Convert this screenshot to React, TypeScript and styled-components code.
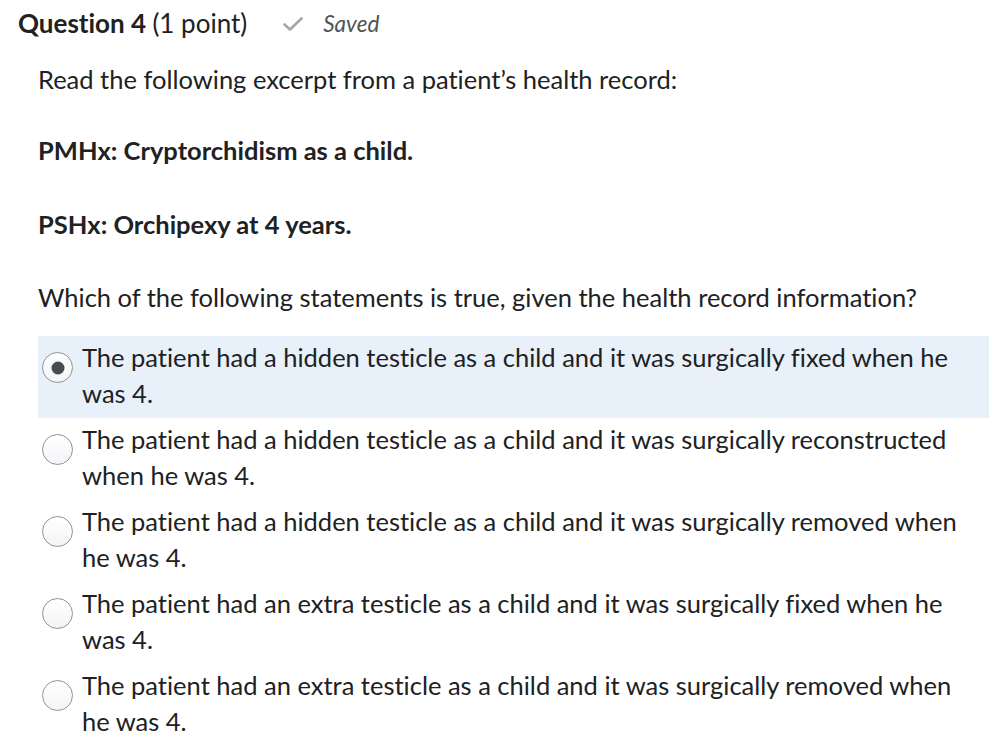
import styled, { createGlobalStyle } from 'styled-components';

const GlobalStyle = createGlobalStyle`
  body {
    margin: 0;
    background: #ffffff;
    font-family: Lato, 'Open Sans', sans-serif;
    font-variant-ligatures: none;
    color: #202122;
  }
`;

const options = [
  'The patient had a hidden testicle as a child and it was surgically fixed when he was 4.',
  'The patient had a hidden testicle as a child and it was surgically reconstructed when he was 4.',
  'The patient had a hidden testicle as a child and it was surgically removed when he was 4.',
  'The patient had an extra testicle as a child and it was surgically fixed when he was 4.',
  'The patient had an extra testicle as a child and it was surgically removed when he was 4.',
];

const App = () => {
  const selected = 0;

  return (
    <Page>
      <GlobalStyle />
      <Header>
        <Title>
          Question 4 <Points>(1 point)</Points>
        </Title>
        <Status>
          <CheckIcon viewBox="0 0 20 15">
            <polyline points="1.5,7.5 7,12.5 18.5,1.5" />
          </CheckIcon>
          <SavedText>Saved</SavedText>
        </Status>
      </Header>

      <Content>
        <Paragraph $gap={35}>Read the following excerpt from a patient’s health record:</Paragraph>
        <Paragraph $gap={38}>
          <strong>PMHx: Cryptorchidism as a child.</strong>
        </Paragraph>
        <Paragraph>
          <strong>PSHx: Orchipexy at 4 years.</strong>
        </Paragraph>
        <Paragraph>
          Which of the following statements is true, given the health record information?
        </Paragraph>

        <OptionList>
          {options.map((text, i) => (
            <Option key={i} $selected={i === selected}>
              <Radio $checked={i === selected} />
              <OptionText>{text}</OptionText>
            </Option>
          ))}
        </OptionList>
      </Content>
    </Page>
  );
};

export default App;

const Page = styled.div`
  width: 1000px;
  height: 742px;
  overflow: hidden;
  padding-top: 8px;
  box-sizing: border-box;
`;

const Header = styled.div`
  display: flex;
  align-items: center;
  padding-left: 18px;
  height: 30px;
`;

const Title = styled.h2`
  margin: 0;
  font-size: 26px;
  line-height: 30px;
  font-weight: 700;
  color: #202122;
`;

const Points = styled.span`
  font-weight: 400;
`;

const Status = styled.div`
  display: flex;
  align-items: center;
  margin-left: 36px;
  gap: 20px;
`;

const CheckIcon = styled.svg`
  width: 20px;
  height: 15px;
  fill: none;
  stroke: #a2a7aa;
  stroke-width: 2.6;
  stroke-linecap: round;
  stroke-linejoin: round;
  margin-top: 2px;
`;

const SavedText = styled.span`
  font-size: 22.5px;
  font-style: italic;
  color: #4f5356;
`;

const Content = styled.div`
  padding: 23px 11px 0 38px;
`;

const Paragraph = styled.p<{ $gap?: number }>`
  margin: 0 0 ${(p) => p.$gap ?? 37}px;
  font-size: 25.5px;
  line-height: 36px;

  strong {
    font-weight: 700;
  }
`;

const OptionList = styled.div`
  display: flex;
  flex-direction: column;
  margin-top: -16px;
`;

const Option = styled.label<{ $selected: boolean }>`
  display: flex;
  align-items: flex-start;
  gap: 9px;
  padding: 3px 0 7px 4px;
  background: ${(p) => (p.$selected ? '#e8f0fa' : 'transparent')};
  cursor: pointer;
`;

const Radio = styled.span<{ $checked: boolean }>`
  position: relative;
  flex: 0 0 auto;
  width: 31px;
  height: 31px;
  margin-top: 13px;
  border-radius: 50%;
  box-sizing: border-box;
  border: 1.5px solid #8f9497;
  background: linear-gradient(#ffffff, #f3f4f6);

  &::after {
    content: '';
    position: absolute;
    left: 50%;
    top: 50%;
    width: 13px;
    height: 13px;
    border-radius: 50%;
    transform: translate(-50%, -50%);
    background: #494c4e;
    display: ${(p) => (p.$checked ? 'block' : 'none')};
  }
`;

const OptionText = styled.span`
  font-size: 25.5px;
  line-height: 36px;
  color: #202122;
  max-width: 890px;
`;
